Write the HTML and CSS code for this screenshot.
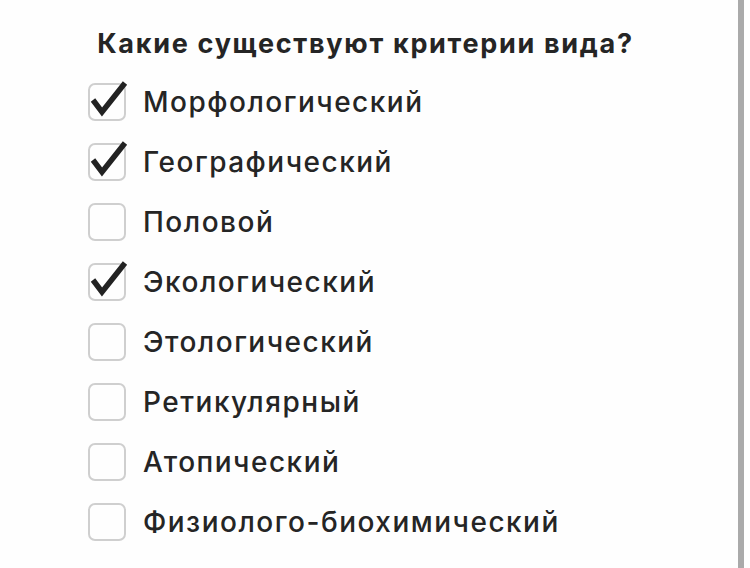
FILE: index.html
```html
<!DOCTYPE html>
<html lang="ru">
<head>
<meta charset="utf-8">
<link rel="stylesheet" href="styles.css">
</head>
<body>
<div class="page">
  <main class="quiz">
    <h1 class="title">Какие существуют критерии вида?</h1>
    <ul class="options">
      <li class="option checked"><span class="box"><svg class="tick" viewBox="0 0 40 40"><path d="M5 17 L14 29 L37 0"/></svg></span><span class="label">Морфологический</span></li>
      <li class="option checked"><span class="box"><svg class="tick" viewBox="0 0 40 40"><path d="M5 17 L14 29 L37 0"/></svg></span><span class="label">Географический</span></li>
      <li class="option"><span class="box"></span><span class="label">Половой</span></li>
      <li class="option checked"><span class="box"><svg class="tick" viewBox="0 0 40 40"><path d="M5 17 L14 29 L37 0"/></svg></span><span class="label">Экологический</span></li>
      <li class="option"><span class="box"></span><span class="label">Этологический</span></li>
      <li class="option"><span class="box"></span><span class="label">Ретикулярный</span></li>
      <li class="option"><span class="box"></span><span class="label">Атопический</span></li>
      <li class="option"><span class="box"></span><span class="label">Физиолого-биохимический</span></li>
    </ul>
  </main>
  <div class="rail"></div>
</div>
</body>
</html>
```
FILE: styles.css
```css
html, body {
  margin: 0;
  padding: 0;
  background: #fefefe;
}
.page {
  display: flex;
  width: 750px;
  height: 568px;
  overflow: hidden;
}
.quiz {
  width: 738px;
  font-family: Inter, "Noto Sans", sans-serif;
  color: #252525;
}
.title {
  margin: 27px 0 0 0;
  padding-right: 7px;
  text-align: center;
  font-size: 27px;
  font-weight: 700;
  line-height: 34px;
  letter-spacing: 1.7px;
}
.options {
  list-style: none;
  margin: 22px 0 0 88px;
  padding: 0;
  display: flex;
  flex-direction: column;
  gap: 22px;
}
.option {
  display: flex;
  align-items: center;
  gap: 17px;
  height: 38px;
}
.box {
  position: relative;
  width: 34px;
  height: 34px;
  border: 2px solid #cfcfcf;
  border-radius: 7px;
  flex: none;
}
.tick {
  position: absolute;
  left: -2px;
  top: -2px;
  width: 40px;
  height: 40px;
  overflow: visible;
  fill: none;
  stroke: #222;
  stroke-width: 5.5;
  stroke-linecap: butt;
  stroke-linejoin: miter;
}
.label {
  font-size: 28px;
  font-weight: 500;
  line-height: 38px;
  letter-spacing: 1.5px;
}
.rail {
  width: 6px;
  background: #aaaaaa;
  flex: none;
}
```
